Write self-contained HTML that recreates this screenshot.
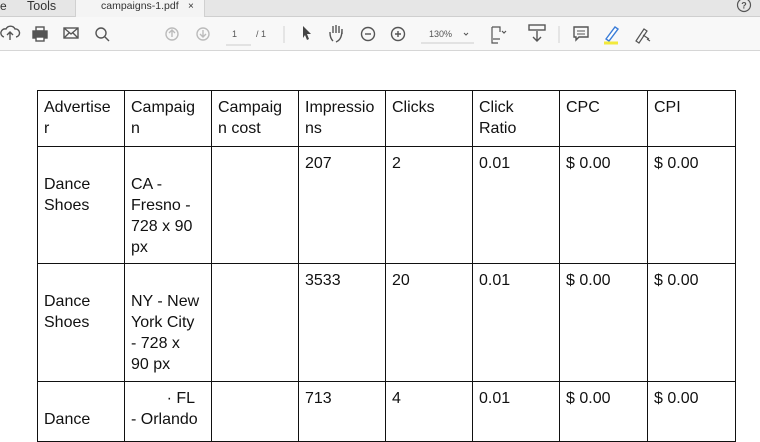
<!DOCTYPE html>
<html><head><meta charset="utf-8"><style>
*{margin:0;padding:0;box-sizing:border-box}
body{width:760px;height:424px;overflow:hidden;background:#fff;font-family:"Liberation Sans",Arial,sans-serif;position:relative}
.tabbar{position:absolute;left:0;top:0;width:760px;height:17px;background:#e6e6e6;border-bottom:1px solid #cfcfcf}
.tab{position:absolute;top:0;height:17px;font-size:12px;color:#333;line-height:13px}
.active{left:75px;width:130px;background:#f4f4f4;height:18px;border-left:1px solid #d0d0d0;border-right:1px solid #d0d0d0}
.toolbar{position:absolute;left:0;top:17px;width:760px;height:34px;background:#f8f8f8;border-bottom:1px solid #d6d6d6}
.ic{position:absolute;color:#555}
table{position:absolute;left:37px;top:90px;border-collapse:collapse;table-layout:fixed}
td{border:1.6px solid #111;vertical-align:top;font-size:16px;line-height:21px;color:#111;padding:6px 6px 0 6px;overflow:hidden;white-space:nowrap}
</style></head><body>
<div class="tabbar">
<div class="tab" style="left:0">e</div>
<div class="tab" style="left:27px;font-size:12.5px">Tools</div>
<div class="tab active"><span style="position:absolute;left:25px;font-size:10.5px">campaigns-1.pdf</span><span style="position:absolute;left:112px;font-size:10px">×</span></div>
<svg style="position:absolute;left:736px;top:-3px" width="16" height="16"><circle cx="8" cy="8" r="6.5" fill="none" stroke="#555" stroke-width="1.2"/><text x="5.2" y="11.5" font-size="9" font-family="Liberation Sans" fill="#555" font-weight="bold">?</text></svg>
</div>
<div class="toolbar">
<svg width="760" height="34" style="position:absolute;left:0;top:0" fill="none" stroke="#555" stroke-width="1.4">
<path d="M4 20a4 4 0 0 1 2-8a5 5 0 0 1 9 0a4 4 0 0 1 1 8M10 23v-8M7 18l3-3 3 3"/>
<rect x="33" y="14" width="14" height="7" fill="#555"/><rect x="36" y="10" width="8" height="4"/><rect x="36" y="20" width="8" height="4" fill="#fff"/>
<rect x="64" y="11" width="14" height="10"/><path d="M64 11l7 6 7-6M64 21l5-5M78 21l-5-5"/>
<circle cx="101" cy="16" r="5"/><path d="M105 20l4 4"/>
<g stroke="#bbb"><circle cx="172" cy="17" r="6"/><path d="M172 20v-6M169 16l3-3 3 3"/><circle cx="203" cy="17" r="6"/><path d="M203 13v6M200 17l3 3 3-3"/></g>
<path d="M226 28h25" stroke="#ccc" stroke-width="1"/>
<path d="M284 9v17" stroke="#ddd"/>
<path d="M303 9l8 8h-4l2 5-2 1-2-5-2 3z" fill="#444" stroke="none"/>
<path d="M333 24c-2-2-3-5-3-8v-1m3 1v-7m3 7v-8m3 8v-7m3 8v-5c0 6-1 11-6 13" />
<circle cx="368" cy="17" r="6.5"/><path d="M365 17h6"/>
<circle cx="398" cy="17" r="6.5"/><path d="M395 17h6M398 14v6"/>
<path d="M421 26h53" stroke="#ccc" stroke-width="1"/>
<path d="M464 16l2 2 2-2" stroke-width="1"/>
<path d="M492 10h8v5M492 10v16h6M493 22h7M502 14l2 2 2-2" stroke-width="1.2"/>
<rect x="529" y="8" width="16" height="5"/><path d="M537 14v10M533 20l4 4 4-4"/>
<path d="M559 9v17" stroke="#ddd"/>
<path d="M574 10h14v10h-9l-3 3v-3h-2z"/><path d="M577 14h8M577 17h8" stroke-width="1"/>
<path d="M606 22l9-12 3 2-9 12z" stroke="#3b7dd8" fill="#fff"/><path d="M604 26h14" stroke="#f2e93c" stroke-width="3"/>
<path d="M636 24l8-12 3 2-8 12zM643 18l6 4M647 22l3 2" stroke-width="1.2"/>
</svg>
<div class="ic" style="left:232px;top:12px;font-size:9px">1</div>
<div class="ic" style="left:256px;top:12px;font-size:9px">/ 1</div>
<div class="ic" style="left:429px;top:12px;font-size:9px">130%</div>
</div>
<table>
<colgroup><col style="width:87px"><col style="width:87px"><col style="width:87px"><col style="width:87px"><col style="width:87px"><col style="width:87px"><col style="width:88px"><col style="width:88px"></colgroup>
<tr style="height:56px"><td>Advertise<br>r</td><td>Campaig<br>n</td><td>Campaig<br>n cost</td><td>Impressio<br>ns</td><td>Clicks</td><td>Click<br>Ratio</td><td>CPC</td><td>CPI</td></tr>
<tr style="height:117px"><td><br>Dance<br>Shoes</td><td><br>CA -<br>Fresno -<br>728 x 90<br>px</td><td></td><td>207</td><td>2</td><td>0.01</td><td>$ 0.00</td><td>$ 0.00</td></tr>
<tr style="height:118px"><td><br>Dance<br>Shoes</td><td><br>NY - New<br>York City<br>- 728 x<br>90 px</td><td></td><td>3533</td><td>20</td><td>0.01</td><td>$ 0.00</td><td>$ 0.00</td></tr>
<tr style="height:60px"><td><br>Dance</td><td>&nbsp;&nbsp;&nbsp;&nbsp;&nbsp;&nbsp;&nbsp;&nbsp;· FL<br>- Orlando</td><td></td><td>713</td><td>4</td><td>0.01</td><td>$ 0.00</td><td>$ 0.00</td></tr>
</table>
</body></html>
